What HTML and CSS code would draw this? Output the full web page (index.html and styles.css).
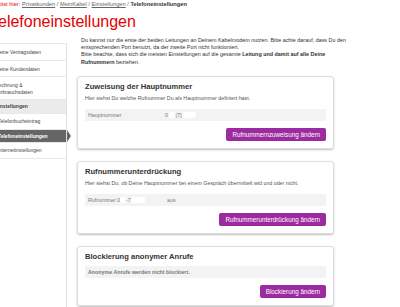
FILE: index.html
```html
<!DOCTYPE html>
<html lang="de">
<head>
    <meta charset="UTF-8">
    <meta name="viewport" content="width=device-width, initial-scale=1.0">
    <title>Telefoneinstellungen</title>
    <link rel="stylesheet" href="styles.css">
</head>
<body>
    <div class="page">
        <div class="breadcrumb">
            <span class="crumb-label">Du bist hier:</span>
            <a href="#">Privatkunden</a> /
            <a href="#">MeinKabel</a> /
            <a href="#">Einstellungen</a> /
            <strong>Telefoneinstellungen</strong>
        </div>
        <h1 class="page-title">Telefoneinstellungen</h1>

        <div class="layout">
            <!-- left navigation -->
            <ul class="sidenav">
                <li class="nav-item">Meine Vertragsdaten</li>
                <li class="nav-item">Meine Kundendaten</li>
                <li class="nav-item">Rechnung &amp;<br>Verbrauchsdaten</li>
                <li class="nav-item nav-group">Einstellungen</li>
                <li class="nav-item nav-sub">Telefonbucheintrag</li>
                <li class="nav-item nav-sub active">Telefoneinstellungen</li>
                <li class="nav-item nav-sub">Internetinstellungen</li>
            </ul>

            <div class="main">
                <p class="intro">
                    Du kannst nur die erste der beiden Leitungen an Deinem Kabelmodem nutzen. Bitte achte darauf, dass Du
                    den entsprechenden Port benutzt, da der zweite Port nicht funktioniert.<br>
                    Bitte beachte, dass sich die meisten Einstellungen auf die gesamte <b>Leitung und damit auf alle Deine
                    Rufnummern</b> beziehen.
                </p>

                <div class="card">
                    <h2 class="card-title">Zuweisung der Hauptnummer</h2>
                    <p class="card-text">Hier siehst Du welche Rufnummer Du als Hauptnummer definiert hast.</p>
                    <div class="info-row">
                        <span class="row-label">Hauptnummer</span>
                        <span class="row-value">0 <span class="hidden-num short"></span>(7)<span class="hidden-num"></span></span>
                    </div>
                    <div class="card-actions">
                        <button class="btn">Rufnummernzuweisung ändern</button>
                    </div>
                </div>

                <div class="card">
                    <h2 class="card-title">Rufnummerunterdrückung</h2>
                    <p class="card-text">Hier siehst Du, ob Deine Hauptnummer bei einem Gespräch übermittelt wid und oder nicht.</p>
                    <div class="info-row">
                        <span class="row-label short-label">Rufnummer 0<span class="hidden-num short"></span>-7<span class="hidden-num"></span></span>
                        <span class="row-value">aus</span>
                    </div>
                    <div class="card-actions">
                        <button class="btn">Rufnummerunterdrückung ändern</button>
                    </div>
                </div>

                <div class="card">
                    <h2 class="card-title">Blockierung anonymer Anrufe</h2>
                    <div class="info-row tight">
                        <span class="row-note">Anonyme Anrufe werden nicht blockiert.</span>
                    </div>
                    <div class="card-actions">
                        <button class="btn">Blockierung ändern</button>
                    </div>
                </div>
            </div>
        </div>
    </div>
</body>
</html>
```

FILE: styles.css
```css
body {
    margin: 0;
    font-family: "Liberation Sans", Arial, sans-serif;
    background-color: #fff;
    color: #333;
    overflow: hidden;
}

.page {
    margin-left: -10px;
    width: 370px;
}

.breadcrumb {
    font-size: 5.7px;
    line-height: 7px;
    padding-top: 1px;
    color: #666;
}

.breadcrumb .crumb-label {
    color: #e60000;
}

.breadcrumb a {
    color: #666;
}

.breadcrumb strong {
    color: #333;
}

.page-title {
    margin: 5px 0 0;
    font-size: 16px;
    line-height: 18px;
    font-weight: normal;
    color: #e60000;
}

.layout {
    display: flex;
    margin-top: 6px;
}

/* left navigation */
.sidenav {
    list-style: none;
    margin: 6px 0 0;
    padding: 0;
    width: 76px;
    min-height: 300px;
    border-right: 1px solid #e2e2e2;
    border-top: 1px solid #e6e6e6;
}

.nav-item {
    position: relative;
    font-size: 5px;
    line-height: 6.6px;
    padding: 5px 4px 4px 5px;
    color: #444;
    border-bottom: 1px solid #e8e8e8;
}

.nav-group {
    background-color: #ebebeb;
    font-weight: bold;
    padding-top: 3px;
    padding-bottom: 3px;
}

.nav-sub {
    padding: 4px 4px 4px 8px;
}

.nav-sub.active {
    background-color: #666;
    color: #fff;
    font-weight: bold;
    padding-top: 3px;
    padding-bottom: 3px;
}

.nav-sub.active::after {
    content: "";
    position: absolute;
    top: 0;
    right: -5px;
    border-top: 6.5px solid transparent;
    border-bottom: 6.5px solid transparent;
    border-left: 4px solid #666;
}

.main {
    flex: 1;
    padding-left: 10px;
}

.intro {
    margin: 0 0 10px 4px;
    font-size: 5.4px;
    line-height: 7.2px;
    color: #333;
}

.card {
    border: 1px solid #dedede;
    border-radius: 3px;
    box-shadow: 0 1px 2px rgba(0, 0, 0, 0.25);
    padding: 5px 7px 7px;
    width: 241px;
    margin-bottom: 12px;
}

.card-title {
    margin: 0;
    font-size: 7.6px;
    line-height: 10px;
    font-weight: bold;
    color: #333;
}

.card-text {
    margin: 3px 0 0;
    font-size: 5.3px;
    line-height: 7px;
    color: #555;
}

.info-row {
    display: flex;
    margin-top: 7px;
    height: 12px;
    line-height: 12px;
    background-color: #f3f3f3;
    font-size: 5.3px;
    color: #777;
    padding-left: 3px;
}

.info-row.tight {
    margin-top: 4px;
}

.row-label {
    width: 77px;
}

.short-label {
    width: 79px;
}

.hidden-num {
    display: inline-block;
    width: 14px;
    height: 6px;
    background-color: #fff;
    vertical-align: middle;
    border-radius: 2px;
}

.hidden-num.short {
    width: 6px;
}

.row-note {
    font-weight: bold;
    color: #777;
}

.card-actions {
    display: flex;
    justify-content: flex-end;
    margin-top: 7px;
}

.btn {
    height: 13px;
    padding: 0 6px;
    border: none;
    border-radius: 2px;
    background-color: #9c2aa0;
    color: #fff;
    font-family: "Liberation Sans", Arial, sans-serif;
    font-size: 6.3px;
    cursor: pointer;
}
```
